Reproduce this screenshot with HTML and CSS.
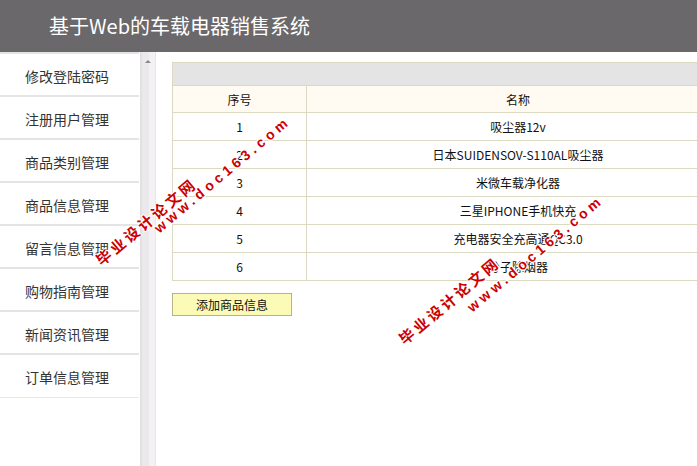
FILE: index.html
```html
<!DOCTYPE html>
<html lang="zh-CN">
<head>
    <meta charset="UTF-8">
    <title>基于Web的车载电器销售系统</title>
    <link rel="stylesheet" href="styles.css">
</head>
<body>
    <div class="top">
        <h1>基于Web的车载电器销售系统</h1>
    </div>

    <div class="layout">
        <ul class="menu">
            <li>修改登陆密码</li>
            <li>注册用户管理</li>
            <li>商品类别管理</li>
            <li>商品信息管理</li>
            <li>留言信息管理</li>
            <li>购物指南管理</li>
            <li>新闻资讯管理</li>
            <li>订单信息管理</li>
        </ul>
        <div class="scrollbar">
            <span class="arrow"></span>
        </div>
        <div class="main">
            <table class="list">
                <tr class="bar"><td colspan="2"></td></tr>
                <tr class="head">
                    <td class="num">序号</td>
                    <td>名称</td>
                </tr>
                <tr><td class="num">1</td><td>吸尘器12v</td></tr>
                <tr><td class="num">2</td><td>日本SUIDENSOV-S110AL吸尘器</td></tr>
                <tr><td class="num">3</td><td>米微车载净化器</td></tr>
                <tr><td class="num">4</td><td>三星IPHONE手机快充</td></tr>
                <tr><td class="num">5</td><td>充电器安全充高通QC3.0</td></tr>
                <tr><td class="num">6</td><td>分子除烟器</td></tr>
            </table>
            <button class="add">添加商品信息</button>
        </div>
    </div>

    <!-- watermark -->
    <div class="wm wm-cn" style="left:98px; top:254px;">毕业设计论文网</div>
    <div class="wm wm-url" style="left:156px; top:222px;">www.doc163.com</div>
    <div class="wm wm-cn" style="left:401px; top:333px;">毕业设计论文网</div>
    <div class="wm wm-url" style="left:469px; top:301px;">www.doc163.com</div>
</body>
</html>
```

FILE: styles.css
```css
body {
    margin: 0;
    font-family: "Noto Sans CJK SC", "Liberation Sans", sans-serif;
    background: #fff;
    overflow: hidden;
    height: 466px;
}
.top {
    height: 52px;
    background-color: #6a686a;
}
.top h1 {
    margin: 0;
    padding-left: 49px;
    line-height: 52px;
    font-size: 20px;
    font-weight: normal;
    color: #fff;
}
.layout {
    display: flex;
    height: 414px;
}
.menu {
    list-style: none;
    margin: 0;
    padding: 0;
    width: 139px;
    border-top: 2px solid #e4e4e4;
    align-self: flex-start;
}
.menu li {
    height: 41px;
    line-height: 44px;
    padding-left: 25px;
    font-size: 14px;
    color: #333;
    border-bottom: 2px solid #e4e4e4;
}
.menu li:last-child {
    height: 42px;
    border-bottom: 1px solid #e8e8e8;
}
.scrollbar {
    position: relative;
    width: 16px;
    margin-left: 1px;
    background: linear-gradient(to right, #e2e0e2 0, #e2e0e2 2px, #ebe9eb 2px, #ebe9eb 9px, #f4f1f4 9px, #f4f1f4 15px, #e8e6e8 15px);
}
.scrollbar .arrow {
    position: absolute;
    left: 5px;
    top: 8px;
    width: 0;
    height: 0;
    border-left: 3px solid transparent;
    border-right: 3px solid transparent;
    border-bottom: 3px solid #8a888a;
}
.main {
    flex: 1;
    overflow: hidden;
    padding: 10px 0 0 16px;
}
.list {
    width: 558px;
    border-collapse: collapse;
    font-size: 12px;
    color: #111;
}
.list td {
    border: 1px solid #dcd9c2;
    text-align: center;
    height: 27px;
    padding: 0;
}
.list .num {
    width: 133px;
}
.list .bar td {
    height: 22px;
    background-color: #e4e4e4;
}
.list .head td {
    height: 26px;
    background-color: #fffbf2;
}
.add {
    margin-top: 12px;
    width: 120px;
    height: 23px;
    padding: 0;
    font-family: "Noto Sans CJK SC", sans-serif;
    font-size: 12px;
    color: #111;
    background-color: #fbfab6;
    border: 1px solid #b5b38e;
}
.wm {
    position: absolute;
    line-height: 16px;
    white-space: nowrap;
    color: #cc0000;
    font-weight: bold;
    transform: rotate(-40deg);
    transform-origin: 0 50%;
    text-shadow: 1px 1px 0 #fff, -1px -1px 0 #fff, 1px -1px 0 #fff, -1px 1px 0 #fff;
    pointer-events: none;
}
.wm-cn {
    font-size: 15px;
    letter-spacing: 3px;
}
.wm-url {
    font-family: "Liberation Sans", sans-serif;
    font-size: 14px;
    letter-spacing: 4px;
}
```
